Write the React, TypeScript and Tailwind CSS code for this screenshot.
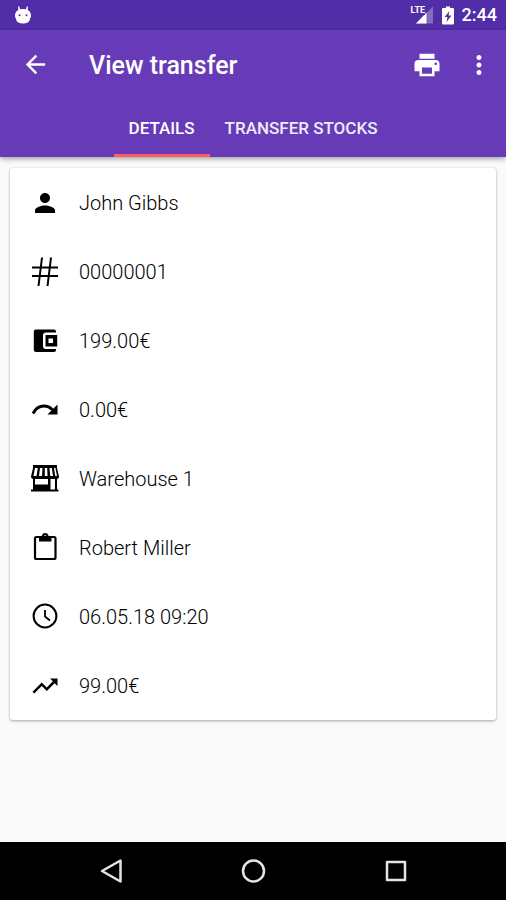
import type { ReactNode } from 'react';
import { MdArrowBack, MdMoreVert, MdPerson, MdPrint, MdTrendingUp } from 'react-icons/md';

function HashIcon() {
  return (
    <svg viewBox="0 0 30 30" className="size-[30px]" fill="none" stroke="currentColor" strokeWidth="2">
      <path d="M2 10.500H28M2 19H28M12 0.500L8.500 29M21 0.500L17.500 29" />
    </svg>
  );
}

function WalletIcon() {
  return (
    <svg viewBox="0 0 30 30" className="size-[30px]" fill="currentColor">
      <path d="M6 3.500H24Q26 3.500 26 5.500V6.500H16Q13 6.500 13 9.500V20Q13 23 16 23H26V24Q26 26 24 26H6Q3.800 26 3.800 24V5.500Q3.800 3.500 6 3.500Z" />
      <path fillRule="evenodd" d="M15.500 9H27.200V20.500H15.500ZM18.500 12.500V17H23V12.500Z" />
    </svg>
  );
}

function RedoIcon() {
  return (
    <svg viewBox="0 0 30 30" className="size-[30px]">
      <path d="M3 18.500C5.500 13.500 9.500 11 14 11C17.500 11 20.500 12.800 22.500 14.800" fill="none" stroke="currentColor" strokeWidth="2.800" />
      <path d="M27.500 9.500V19.500H17.500Z" fill="currentColor" />
    </svg>
  );
}

function StoreIcon() {
  return (
    <svg viewBox="0 0 30 30" className="size-[30px]">
      <path
        fill="currentColor"
        fillRule="evenodd"
        d="M3 1H27V4L29 12.500C29 14 28 14.800 27 15V25.500H28.500V27.500H1V25.500H3V15C2 14.800 1 14 1 12.500L3 4ZM5 4L3.500 12H6.500L7.800 4ZM10 4L9 12H12L12.500 4ZM14.800 4V12H17.500L17.200 4ZM19.500 4L20.200 12H23L21.800 4ZM24 4L25.200 12H27L25.400 4ZM5 15V20.500H18V15ZM20.500 15V25.500H25V15Z"
      />
    </svg>
  );
}

function ClipboardIcon() {
  return (
    <svg viewBox="0 0 30 30" className="size-[30px]">
      <rect x="5" y="4" width="20.500" height="22" rx="1.500" fill="none" stroke="currentColor" strokeWidth="2.200" />
      <path
        fill="currentColor"
        fillRule="evenodd"
        d="M9 3H11.800C12.200 1.200 13.500 0 15.200 0S18.200 1.200 18.600 3H21.500V8.500H9ZM15.200 2.200A1.300 1.300 0 1 0 15.200 4.800A1.300 1.300 0 1 0 15.200 2.200Z"
      />
    </svg>
  );
}

function ClockIcon() {
  return (
    <svg viewBox="0 0 30 30" className="size-[30px]" fill="none" stroke="currentColor">
      <circle cx="15" cy="14" r="11.400" strokeWidth="2" />
      <path d="M15 8V14.500L20 18.500" strokeWidth="1.800" />
    </svg>
  );
}

function AndroidIcon() {
  return (
    <svg viewBox="0 0 18 18" className="size-[18px]">
      <path
        fill="currentColor"
        fillRule="evenodd"
        d="M4 0.500H5.300L6 3.200Q9 2.600 12 3.200L12.700 0.500H14L13.700 4Q16.500 5 17 8.500Q17.200 11 16.200 12.200Q15.500 17.500 9 17.500T1.800 12.200Q0.800 11 1 8.500Q1.500 5 4.300 4ZM5.500 8.200A1 1 0 1 0 5.500 10.200A1 1 0 1 0 5.500 8.200ZM12.500 8.200A1 1 0 1 0 12.500 10.200A1 1 0 1 0 12.500 8.200Z"
      />
    </svg>
  );
}

function BatteryIcon() {
  return (
    <svg viewBox="0 0 12 19" className="h-[19px] w-3">
      <path fill="#fff" d="M4 0.500H8V2H11Q12 2 12 3V17.500Q12 18.500 11 18.500H1Q0 18.500 0 17.500V3Q0 2 1 2H4Z" />
      <path fill="#512da8" d="M7.500 5L2.500 11H5.500L4.500 16L9.500 9.500H6.500Z" />
    </svg>
  );
}

function StatusBar() {
  return (
    <div className="flex h-[30px] items-center bg-[#512da8] pr-[9px] pl-3.5 text-white">
      <AndroidIcon />
      <div className="ml-auto flex items-center">
        <div className="relative mr-[9px]">
          <svg viewBox="0 0 18 18" className="size-[18px]">
            <path d="M18 0.500V17.500H1Z" fill="#fff" fillOpacity="0.3" />
            <path d="M11.500 6.600V17.500H1Z" fill="#fff" />
          </svg>
          <span className="absolute -top-px -left-1 bg-[#512da8] text-[9px] leading-[10px] font-bold">LTE</span>
        </div>
        <BatteryIcon />
        <time className="ml-2 text-[18px] leading-[30px] font-medium">2:44</time>
      </div>
    </div>
  );
}

const tabs = ['Details', 'Transfer stocks'];

function AppBar() {
  return (
    <header className="relative bg-[#673ab7] text-white shadow-[0_2px_5px_rgba(0,0,0,0.35)]">
      <div className="flex h-[71px] items-center pr-3 pl-[21px]">
        <button type="button" aria-label="Back" className="pb-0.5">
          <MdArrowBack size={29} />
        </button>
        <h1 className="ml-[39px] text-[25px] leading-[30px] font-medium">View transfer</h1>
        <button type="button" aria-label="Print" className="ml-auto pb-0.5">
          <MdPrint size={30} />
        </button>
        <button type="button" aria-label="More options" className="ml-[22px] pb-0.5">
          <MdMoreVert size={30} />
        </button>
      </div>
      <nav role="tablist" className="flex h-14 justify-center">
        {tabs.map((tab, i) => (
          <button
            key={tab}
            type="button"
            role="tab"
            aria-selected={i === 0}
            className={`border-b-3 px-[15px] pt-0.5 text-[17px] font-medium uppercase ${
              i === 0 ? 'border-[#ff5c62] text-white' : 'border-transparent text-white/90'
            }`}
          >
            {tab}
          </button>
        ))}
      </nav>
    </header>
  );
}

const rows: { id: string; icon: ReactNode; text: string }[] = [
  { id: 'client', icon: <MdPerson size={30} />, text: 'John Gibbs' },
  { id: 'number', icon: <HashIcon />, text: '00000001' },
  { id: 'total', icon: <WalletIcon />, text: '199.00€' },
  { id: 'returned', icon: <RedoIcon />, text: '0.00€' },
  { id: 'warehouse', icon: <StoreIcon />, text: 'Warehouse 1' },
  { id: 'employee', icon: <ClipboardIcon />, text: 'Robert Miller' },
  { id: 'date', icon: <ClockIcon />, text: '06.05.18 09:20' },
  { id: 'profit', icon: <MdTrendingUp size={30} />, text: '99.00€' },
];

function NavBar() {
  return (
    <div className="flex h-[58px] items-center justify-center gap-[114px] bg-black text-[#e4e4e4]">
      <button type="button" aria-label="Back">
        <svg viewBox="0 0 28 28" className="size-7" fill="none" stroke="currentColor" strokeWidth="2.500" strokeLinejoin="round">
          <path d="M23.500 3.500V24.500L5 14Z" />
        </svg>
      </button>
      <button type="button" aria-label="Home">
        <svg viewBox="0 0 28 28" className="size-7" fill="none" stroke="currentColor" strokeWidth="2.500">
          <circle cx="14.500" cy="14" r="10.500" />
        </svg>
      </button>
      <button type="button" aria-label="Recent apps">
        <svg viewBox="0 0 28 28" className="size-7" fill="none" stroke="currentColor" strokeWidth="2.500" strokeLinejoin="round">
          <rect x="6" y="5" width="18" height="18" />
        </svg>
      </button>
    </div>
  );
}

export default function App() {
  return (
    <div className="flex min-h-screen flex-col bg-[#fafafa] font-['Roboto',sans-serif]">
      <StatusBar />
      <AppBar />
      <main className="flex-1 px-2.5 pt-[11px]">
        <ul className="rounded-[3px] bg-white shadow-[0_1px_3px_rgba(0,0,0,0.35)]">
          {rows.map((row) => (
            <li key={row.id} className="flex h-[69px] items-center gap-[19px] pl-5 text-black">
              {row.icon}
              <span className="text-[20px] leading-6 font-light">{row.text}</span>
            </li>
          ))}
        </ul>
      </main>
      <NavBar />
    </div>
  );
}
